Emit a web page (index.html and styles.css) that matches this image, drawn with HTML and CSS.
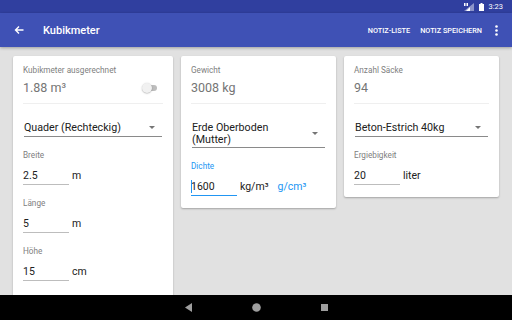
FILE: index.html
```html
<!DOCTYPE html>
<html lang="de">
  <head>
    <meta charset="UTF-8" />
    <meta name="viewport" content="width=device-width, initial-scale=1.0" />
    <title>Kubikmeter</title>
    <link rel="stylesheet" href="styles.css">
  </head>
  <body>
    <div class="statusbar">
      <svg class="signal" width="10" height="8" viewBox="0 0 10 8">
        <polygon points="10,0 10,8 0,8" fill="#ffffff" opacity="0.45" />
        <polygon points="6,4 6,8 2,8" fill="#ffffff" />
        <rect x="0" y="0" width="1.5" height="3" fill="#ffffff" />
        <rect x="2.5" y="0" width="1.5" height="3" fill="#ffffff" />
      </svg>
      <svg class="battery" width="5" height="8" viewBox="0 0 5 8">
        <rect x="1.5" y="0" width="2" height="1" fill="#ffffff" />
        <rect x="0" y="1" width="5" height="7" fill="#ffffff" />
      </svg>
      <span class="clock">3:23</span>
    </div>
    <div class="toolbar">
      <svg class="back" width="10" height="10" viewBox="0 0 10 10">
        <path d="M9.5 5H1.5M5 1.5L1.5 5L5 8.5" stroke="#ffffff" stroke-width="1.4" fill="none" />
      </svg>
      <div class="title">Kubikmeter</div>
      <div class="action">NOTIZ-LISTE</div>
      <div class="action">NOTIZ SPEICHERN</div>
      <svg class="more" width="3" height="11" viewBox="0 0 3 11">
        <circle cx="1.5" cy="1.5" r="1.3" fill="#ffffff" />
        <circle cx="1.5" cy="5.5" r="1.3" fill="#ffffff" />
        <circle cx="1.5" cy="9.5" r="1.3" fill="#ffffff" />
      </svg>
    </div>
    <div class="content">
      <div class="card tall">
        <div class="label">Kubikmeter ausgerechnet</div>
        <div class="result">
          <span>1.88 m³</span>
          <span class="switch"><span class="thumb"></span></span>
        </div>
        <div class="divider"></div>
        <div class="spinner">
          <span>Quader (Rechteckig)</span>
          <span class="arrow"></span>
        </div>
        <div class="label field">Breite</div>
        <div class="inputrow">
          <span class="input">2.5</span>
          <span class="unit">m</span>
        </div>
        <div class="label field">Länge</div>
        <div class="inputrow">
          <span class="input">5</span>
          <span class="unit">m</span>
        </div>
        <div class="label field">Höhe</div>
        <div class="inputrow">
          <span class="input">15</span>
          <span class="unit">cm</span>
        </div>
      </div>
      <div class="card">
        <div class="label">Gewicht</div>
        <div class="result"><span>3008 kg</span></div>
        <div class="divider"></div>
        <div class="spinner two">
          <span>Erde Oberboden<br />(Mutter)</span>
          <span class="arrow"></span>
        </div>
        <div class="label field blue">Dichte</div>
        <div class="inputrow">
          <span class="input focus"><span class="cursor"></span>1600</span>
          <span class="unit">kg/m³</span>
          <span class="unit link">g/cm³</span>
        </div>
      </div>
      <div class="card">
        <div class="label">Anzahl Säcke</div>
        <div class="result"><span>94</span></div>
        <div class="divider"></div>
        <div class="spinner">
          <span>Beton-Estrich 40kg</span>
          <span class="arrow"></span>
        </div>
        <div class="label field">Ergiebigkeit</div>
        <div class="inputrow">
          <span class="input">20</span>
          <span class="unit">liter</span>
        </div>
      </div>
    </div>
    <div class="navbar">
      <svg width="7" height="9" viewBox="0 0 7 9"><polygon points="7,0 7,9 0,4.5" fill="#9e9e9e" /></svg>
      <svg width="9" height="9" viewBox="0 0 9 9"><circle cx="4.5" cy="4.5" r="4.3" fill="#9e9e9e" /></svg>
      <svg width="7" height="7" viewBox="0 0 7 7"><rect width="7" height="7" fill="#9e9e9e" /></svg>
    </div>
  </body>
</html>
```

FILE: styles.css
```css
body {
  margin: 0;
  width: 512px;
  height: 320px;
  overflow: hidden;
  background-color: #e1e1e1;
  font-family: Roboto, "Noto Sans", sans-serif;
  display: flex;
  flex-direction: column;
}
.statusbar {
  height: 13px;
  background-color: #303f9f;
  display: flex;
  justify-content: flex-end;
  align-items: center;
  padding-right: 9px;
  gap: 5px;
}
.clock {
  color: #ffffff;
  font-size: 7.5px;
}
.toolbar {
  height: 34px;
  background-color: #3f51b5;
  display: flex;
  align-items: center;
  padding: 0 14px;
  box-shadow: 0 1px 3px rgba(0, 0, 0, 0.3);
  position: relative;
}
.back {
  margin-right: 19px;
}
.title {
  color: #ffffff;
  font-size: 11px;
  font-weight: 500;
  flex: 1;
}
.action {
  color: #ffffff;
  font-size: 7.3px;
  font-weight: 500;
  margin-right: 10px;
}
.more {
  margin-left: 3px;
}
.content {
  flex: 1;
  display: grid;
  grid-template-columns: 160px 155px 155px;
  column-gap: 8px;
  align-items: start;
  padding: 9px 13px 0;
  overflow: hidden;
}
.card {
  background-color: #ffffff;
  border-radius: 2px;
  box-shadow: 0 1px 2px rgba(0, 0, 0, 0.28);
  padding: 9px 10px 12px;
}
.card.tall {
  height: 260px;
}
.label {
  color: #808080;
  font-size: 8.2px;
  line-height: 10px;
}
.label.field {
  margin-top: 13px;
}
.label.blue {
  color: #2196f3;
}
.result {
  display: flex;
  justify-content: space-between;
  align-items: center;
  color: #757575;
  font-size: 12.5px;
  line-height: 16px;
  margin-top: 5px;
  padding-right: 6px;
}
.switch {
  width: 13px;
  height: 6px;
  border-radius: 3px;
  background-color: #bdbdbd;
  position: relative;
}
.thumb {
  position: absolute;
  left: -2px;
  top: -2px;
  width: 10px;
  height: 10px;
  border-radius: 50%;
  background-color: #f1f1f1;
  box-shadow: 0 0.5px 1.5px rgba(0, 0, 0, 0.35);
}
.divider {
  height: 1px;
  background-color: #efefef;
  margin: 7px 0 0;
}
.spinner {
  display: flex;
  justify-content: space-between;
  align-items: center;
  color: #212121;
  font-size: 10.7px;
  line-height: 13px;
  margin: 17px 1px 0;
  padding-bottom: 2px;
  border-bottom: 1px solid #8a8a8a;
}
.spinner.two {
  line-height: 12px;
  margin-top: 17.5px;
  padding-bottom: 1px;
}
.arrow {
  width: 0;
  height: 0;
  border-left: 3px solid transparent;
  border-right: 3px solid transparent;
  border-top: 3px solid #757575;
  margin-right: 7px;
}
.inputrow {
  display: flex;
  align-items: flex-end;
  margin-top: 9px;
  font-size: 10.5px;
  color: #212121;
}
.input {
  width: 46px;
  line-height: 13px;
  padding-bottom: 2px;
  border-bottom: 1px solid #bdbdbd;
  position: relative;
}
.input.focus {
  border-bottom: 1.5px solid #2196f3;
}
.cursor {
  position: absolute;
  left: -0.5px;
  top: 0;
  width: 1px;
  height: 13px;
  background-color: #2196f3;
}
.unit {
  line-height: 13px;
  padding-bottom: 3px;
  margin-left: 3px;
}
.unit.link {
  color: #2196f3;
  margin-left: 9px;
}
.navbar {
  height: 25px;
  background-color: #000000;
  display: flex;
  justify-content: center;
  align-items: center;
  gap: 60px;
}
```
